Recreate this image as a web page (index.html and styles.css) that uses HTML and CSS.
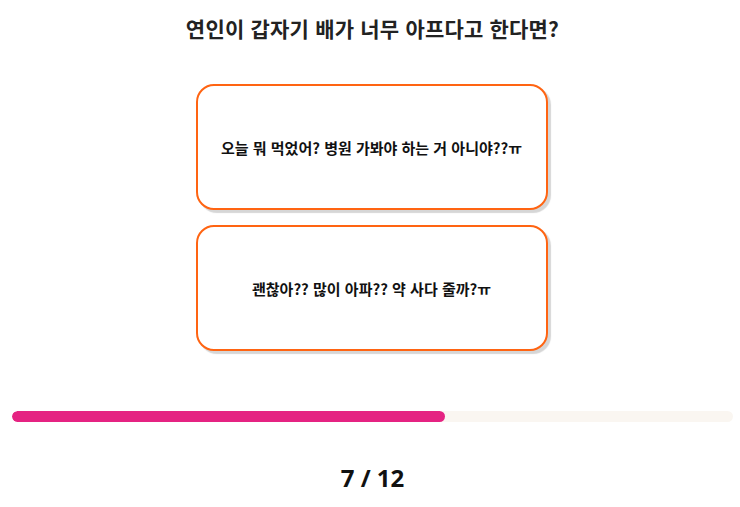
FILE: index.html
```html
<!DOCTYPE html>
<html lang="ko">
<head>
    <meta charset="UTF-8">
    <meta name="viewport" content="width=device-width, initial-scale=1.0">
    <title>Test</title>
    <link rel="stylesheet" href="styles.css">
</head>
<body>
    <div class="page">
        <h1 class="question">연인이 갑자기 배가 너무 아프다고 한다면?</h1>
        <div class="answers">
            <button class="answer">오늘 뭐 먹었어? 병원 가봐야 하는 거 아니야??ㅠ</button>
            <button class="answer">괜찮아?? 많이 아파?? 약 사다 줄까?ㅠ</button>
        </div>
        <div class="progress">
            <div class="bar" style="width:60%"></div>
        </div>
        <div class="count">7 / 12</div>
    </div>
</body>
</html>
```

FILE: styles.css
```css
*{
    margin:0;
    padding:0;
    box-sizing:border-box;
}
body{
    background:#fff;
    font-family:"Noto Sans CJK KR", "Noto Sans", sans-serif;
}
.page{
    width:721px;
    margin-left:12px;
    display:flex;
    flex-direction:column;
    align-items:center;
}
.question{
    margin-top:13px;
    font-size:21px;
    line-height:30px;
    font-weight:700;
    color:#222;
    letter-spacing:0.2px;
}
.answers{
    margin-top:41px;
    margin-right:2px;
    display:flex;
    flex-direction:column;
    gap:15px;
}
.answer{
    width:352px;
    height:126px;
    background:#fff;
    border:2px solid #ff6412;
    border-radius:18px;
    box-shadow:3px 3px 1px #d6d6d6;
    font-family:"Noto Sans CJK KR", sans-serif;
    font-size:15px;
    font-weight:700;
    color:#111;
    cursor:pointer;
}
.progress{
    align-self:stretch;
    margin-top:60px;
    height:11px;
    border-radius:6px;
    background:#faf6f1;
    overflow:hidden;
}
.bar{
    height:100%;
    background:#e52382;
    border-radius:6px;
}
.count{
    margin-top:39px;
    font-family:"Noto Sans", "Noto Sans CJK KR", sans-serif;
    font-size:24px;
    font-weight:700;
    color:#111;
}
```
